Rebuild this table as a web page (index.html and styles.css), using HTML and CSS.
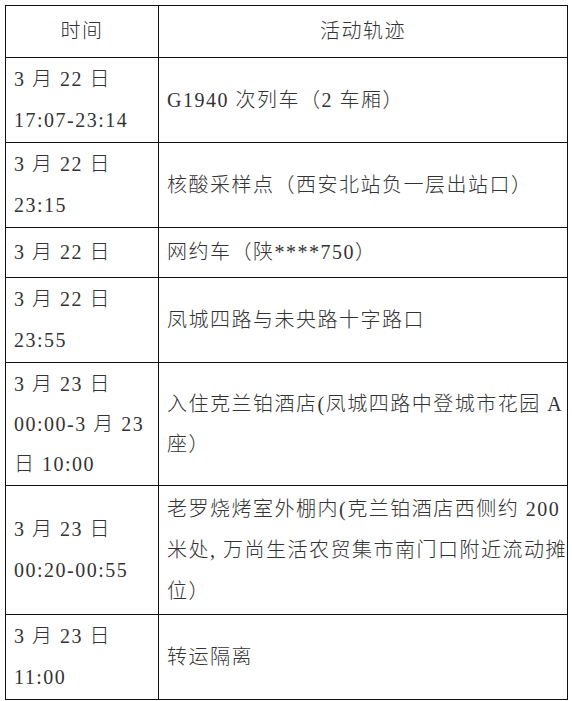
FILE: index.html
```html
<!DOCTYPE html>
<html lang="zh-CN">
<head>
<meta charset="utf-8">
<title>活动轨迹</title>
<link rel="stylesheet" href="styles.css">
</head>
<body>
<table class="trace">
  <colgroup><col class="col-time"><col class="col-place"></colgroup>
  <thead>
    <tr class="row-head"><th>时间</th><th>活动轨迹</th></tr>
  </thead>
  <tbody>
    <tr><td>3 月 22 日<br>17:07-23:14</td><td>G1940 次列车（2 车厢）</td></tr>
    <tr><td>3 月 22 日<br>23:15</td><td>核酸采样点（西安北站负一层出站口）</td></tr>
    <tr class="row-single"><td>3 月 22 日</td><td>网约车（陕****750）</td></tr>
    <tr><td>3 月 22 日<br>23:55</td><td>凤城四路与未央路十字路口</td></tr>
    <tr class="row-compact"><td>3 月 23 日<br>00:00-3 月 23<br>日 10:00</td><td>入住克兰铂酒店(凤城四路中登城市花园 A<br>座）</td></tr>
    <tr class="row-tall"><td>3 月 23 日<br>00:20-00:55</td><td>老罗烧烤室外棚内(克兰铂酒店西侧约 200<br>米处, 万尚生活农贸集市南门口附近流动摊<br>位）</td></tr>
    <tr><td>3 月 23 日<br>11:00</td><td>转运隔离</td></tr>
  </tbody>
</table>
</body>
</html>
```

FILE: styles.css
```css
html, body {
  margin: 0;
  padding: 0;
  background: #ffffff;
}

body {
  padding: 5px 0 0 5px;
  font-family: "Liberation Serif", "Noto Sans CJK SC", serif;
  font-size: 20px;
  letter-spacing: 1.5px;
  font-weight: 300;
  color: #333333;
}

.trace {
  border-collapse: collapse;
  table-layout: fixed;
  width: 562px;
}

.col-time { width: 153px; }
.col-place { width: 409px; }

.trace th,
.trace td {
  border: 1px solid #111;
  padding: 1px 8px;
  line-height: 41px;
  vertical-align: middle;
  text-align: left;
  white-space: nowrap;
  font-weight: 300;
}

.trace th {
  text-align: center;
}

.row-head th { height: 49px; }
.row-single td { height: 47px; }
.row-compact td { line-height: 40px; }
.row-tall td { height: 126px; }
```
